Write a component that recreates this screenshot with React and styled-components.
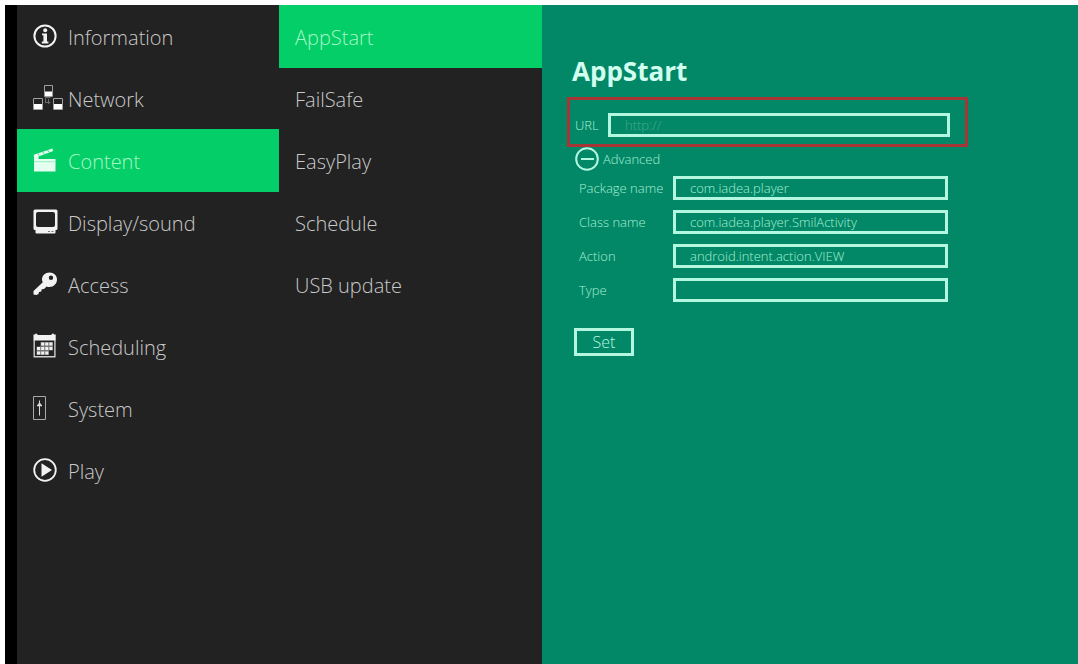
import { useState } from 'react';
import styled, { createGlobalStyle } from 'styled-components';

const COLORS = {
	bgDark: '#222222',
	bgActive: '#04ce67',
	bgPanel: '#028867',
	edge: '#000000',
	textGray: '#c9c9c9',
	textActive: '#a4f7c6',
	textMint: '#a6edd3',
	lineMint: '#b4f7e0',
	title: '#d2fff0',
	placeholder: '#47a98a',
	red: '#a63535',
};

const GlobalStyle = createGlobalStyle`
	* {
		box-sizing: border-box;
	}

	body {
		margin: 0;
		background-color: #ffffff;
		font-family: 'Open Sans', 'Noto Sans', sans-serif;
		font-weight: 300;
	}
`;

const Page = styled.div`
	min-height: 100vh;
	padding: 5px 0 0 5px;
	display: grid;
	grid-template-columns: 274fr 263fr 536fr;
`;

const Menu = styled.nav`
	background-color: ${COLORS.bgDark};
	border-left: ${({ $edge }) => ($edge ? `12px solid ${COLORS.edge}` : 'none')};
	min-width: 0;

	ul {
		list-style: none;
		margin: 0;
		padding: 0;
	}

	li {
		height: 62px;
	}
`;

const MenuLink = styled.a`
	height: 63px;
	padding: 2px 16px 0;
	display: flex;
	align-items: center;
	font-size: 20px;
	line-height: 28px;
	text-decoration: none;
	white-space: nowrap;
	color: ${({ $active }) => ($active ? COLORS.textActive : COLORS.textGray)};
	background-color: ${({ $active }) => ($active ? COLORS.bgActive : 'transparent')};
`;

const IconSlot = styled.span`
	width: 35px;
	padding-bottom: 4px;
	flex-shrink: 0;
	display: flex;
	color: #f2f2f2;
`;

const Panel = styled.main`
	background-color: ${COLORS.bgPanel};
	padding: 48px 24px 24px 25px;
	min-width: 0;
`;

const Title = styled.h1`
	margin: 0 0 8px 5px;
	font-size: 26px;
	line-height: 36px;
	font-weight: 700;
	color: ${COLORS.title};
`;

const Form = styled.form`
	width: 401px;
	max-width: 100%;
	color: ${COLORS.textMint};
	font-size: 13px;
	line-height: 24px;
`;

const UrlRow = styled.div`
	border: 3px solid ${COLORS.red};
	padding: 13px 15px 7px 5px;
	display: flex;
	align-items: center;

	label {
		width: 33px;
		flex-shrink: 0;
	}
`;

const TextInput = styled.input`
	flex: 1;
	min-width: 0;
	height: 24px;
	padding: 0 14px;
	border: 3px solid ${COLORS.lineMint};
	border-radius: 0;
	outline: none;
	background: transparent;
	color: ${COLORS.textMint};
	font: inherit;
	line-height: 18px;

	&::placeholder {
		color: ${COLORS.placeholder};
		opacity: 1;
	}
`;

const AdvancedToggle = styled.button`
	margin-left: 8px;
	padding: 0;
	border: none;
	background: none;
	display: flex;
	align-items: center;
	gap: 4px;
	color: inherit;
	font: inherit;
	cursor: pointer;

	svg {
		color: ${COLORS.lineMint};
	}
`;

const Fields = styled.div`
	padding: 5px 20px 0 12px;
	display: flex;
	flex-direction: column;
	gap: 10px;
`;

const Field = styled.div`
	display: flex;
	align-items: center;

	label {
		width: 94px;
		flex-shrink: 0;
	}
`;

const SetButton = styled.button`
	margin: 26px 0 0 7px;
	width: 60px;
	height: 28px;
	padding: 0;
	border: 3px solid ${COLORS.lineMint};
	background: transparent;
	color: ${COLORS.lineMint};
	font: inherit;
	font-size: 16px;
	line-height: 22px;
	cursor: pointer;
`;

const InfoIcon = () => (
	<svg width="24" height="24" viewBox="0 0 24 24" fill="currentColor">
		<circle cx="12" cy="12" r="10.6" fill="none" stroke="currentColor" strokeWidth="2" />
		<circle cx="12.2" cy="6.2" r="2" />
		<path d="M9 9.4h5v8.2h1.4v1.8H8.8v-1.8h1.6v-6.4H9z" />
	</svg>
);

const NetworkIcon = () => (
	<svg width="30" height="26" viewBox="0 0 30 26" fill="none" stroke="#a0a0a0">
		<path d="M11.500.5h8v11h-8zM.5 13.500h9v11h-9zM20.500 13.500h9v11h-9z" />
		<path d="M12.500 12.500h5M12.500 12.500v5.500M12.500 17.500h5M15.500 14v5" stroke="#6c6c6c" />
		<path d="M12 6.500h7V11h-7zM1 19h8v5H1zM21 19h8v5h-8z" fill="#fff" stroke="none" />
	</svg>
);

const ContentIcon = () => (
	<svg width="24" height="24" viewBox="0 0 24 24" fill="#e4fff0">
		<path d="M1 11h21.500v12.500H1z" />
		<path d="M.8 6.700 19.300.5l.9 2.500L5.500 8.400V11H1z" />
		<path d="M4.500 5.400l1.800 2.200M9.500 3.700l1.800 2.200M14.500 2l1.800 2.200" stroke={COLORS.bgActive} strokeWidth=".8" />
		<path d="M1 13.700h21.500" stroke="#9ceebf" strokeWidth="1" />
	</svg>
);

const DisplayIcon = () => (
	<svg width="25" height="25" viewBox="0 0 25 25" fill="currentColor">
		<path fillRule="evenodd" d="M2 .5h21q1.500 0 1.500 1.500v17.500q0 1.500-1.500 1.500H2Q.5 21 .5 19.500V2Q.5.5 2 .5zM5 3Q3 3 3 5v11q0 2 2 2h15q2 0 2-2V5q0-2-2-2z" />
		<path d="M2.500 20h20v3.500q0 1-1 1h-18q-1 0-1-1z" />
		<path d="M15 22.500h2M18.500 22.500h2" stroke="#777" />
	</svg>
);

const KeyIcon = () => (
	<svg width="25" height="24" viewBox="0 0 25 24" fill="currentColor">
		<path fillRule="evenodd" d="M16.500.5c4.300 0 7.500 3 7.500 7 0 4.300-3.400 7.500-7.500 7.500-1.300 0-2-.2-2.900-.6L11 17l-2.300.3-.4 2.300-2.300.3-.5 2.200L3.500 23 .5 22.600V19L9.800 10.300C9.300 9.300 9 8.500 9 7.500c0-4 3.200-7 7.500-7zM18 3.500a2.200 2.200 0 1 0 0 4.400 2.200 2.200 0 0 0 0-4.400z" />
	</svg>
);

const CalendarIcon = () => (
	<svg width="24" height="25" viewBox="0 0 24 25" fill="currentColor">
		<path d="M.5 1.500H2L3 .3l2 1.700h13l2-1.700 1 1.200h1.700V7.500H.5z" />
		<path d="M1.200 7v16.700h20.700V7" fill="none" stroke="#cfcfcf" strokeWidth="1.400" />
		<path d="M7.500 9h12.500v8.500h-4V22H3.500v-8.500h4z" fill="#777" />
		<path d="M8.200 9.500h3v3h-3zM12.300 9.500h3v3h-3zM16.400 9.500h3v3h-3zM4 14h3.200v3H4zM8.200 14h3v3h-3zM12.300 14h3v3h-3zM16.400 14h3v3h-3zM4 18.500h3.200v3H4zM8.200 18.500h3v3h-3zM12.300 18.500h3v3h-3z" />
	</svg>
);

const SystemIcon = () => (
	<svg width="13" height="24" viewBox="0 0 13 24" fill="none" stroke="#a8a8a8">
		<path d="M.5.500h12v23H.5z" />
		<path d="M6.500 4.500v15" stroke="#d8d8d8" />
		<path d="M4 9.500h5M5 8.200h3" stroke="#d8d8d8" strokeWidth="1.500" />
	</svg>
);

const PlayIcon = () => (
	<svg width="24" height="24" viewBox="0 0 24 24" fill="currentColor">
		<circle cx="12" cy="12" r="10.800" fill="none" stroke="currentColor" strokeWidth="1.800" />
		<path d="M8.500 5.200 19 12 8.500 18.800z" />
	</svg>
);

const ToggleIcon = ({ open }) => (
	<svg width="24" height="24" viewBox="0 0 24 24" fill="none" stroke="currentColor" strokeWidth="2">
		<circle cx="12" cy="12" r="10.800" />
		<path d="M6 12h13" />
		{!open && <path d="M12.500 6v12" />}
	</svg>
);

const mainMenu = [
	{ name: 'Information', Icon: InfoIcon },
	{ name: 'Network', Icon: NetworkIcon },
	{ name: 'Content', Icon: ContentIcon },
	{ name: 'Display/sound', Icon: DisplayIcon },
	{ name: 'Access', Icon: KeyIcon },
	{ name: 'Scheduling', Icon: CalendarIcon },
	{ name: 'System', Icon: SystemIcon },
	{ name: 'Play', Icon: PlayIcon },
];

const contentMenu = ['AppStart', 'FailSafe', 'EasyPlay', 'Schedule', 'USB update'];

const advancedFields = [
	{ id: 'package', label: 'Package name', value: 'com.iadea.player' },
	{ id: 'class', label: 'Class name', value: 'com.iadea.player.SmilActivity' },
	{ id: 'action', label: 'Action', value: 'android.intent.action.VIEW' },
	{ id: 'type', label: 'Type', value: '' },
];

export default function App() {
	const [section, setSection] = useState('Content');
	const [page, setPage] = useState('AppStart');
	const [open, setOpen] = useState(true);

	return (
		<>
			<GlobalStyle />
			<Page>
				<Menu $edge>
					<ul>
						{mainMenu.map(({ name, Icon }) => (
							<li key={name}>
								<MenuLink href="#" $active={name === section} onClick={() => setSection(name)}>
									<IconSlot><Icon /></IconSlot>
									{name}
								</MenuLink>
							</li>
						))}
					</ul>
				</Menu>

				<Menu>
					<ul>
						{contentMenu.map((name) => (
							<li key={name}>
								<MenuLink href="#" $active={name === page} onClick={() => setPage(name)}>
									{name}
								</MenuLink>
							</li>
						))}
					</ul>
				</Menu>

				<Panel>
					<Title>AppStart</Title>
					<Form onSubmit={(e) => e.preventDefault()}>
						<UrlRow>
							<label htmlFor="url">URL</label>
							<TextInput id="url" type="text" placeholder="http://" />
						</UrlRow>
						<AdvancedToggle type="button" aria-expanded={open} onClick={() => setOpen(!open)}>
							<ToggleIcon open={open} />
							Advanced
						</AdvancedToggle>
						{open && (
							<Fields>
								{advancedFields.map(({ id, label, value }) => (
									<Field key={id}>
										<label htmlFor={id}>{label}</label>
										<TextInput id={id} type="text" defaultValue={value} />
									</Field>
								))}
							</Fields>
						)}
						<SetButton type="submit">Set</SetButton>
					</Form>
				</Panel>
			</Page>
		</>
	);
}
